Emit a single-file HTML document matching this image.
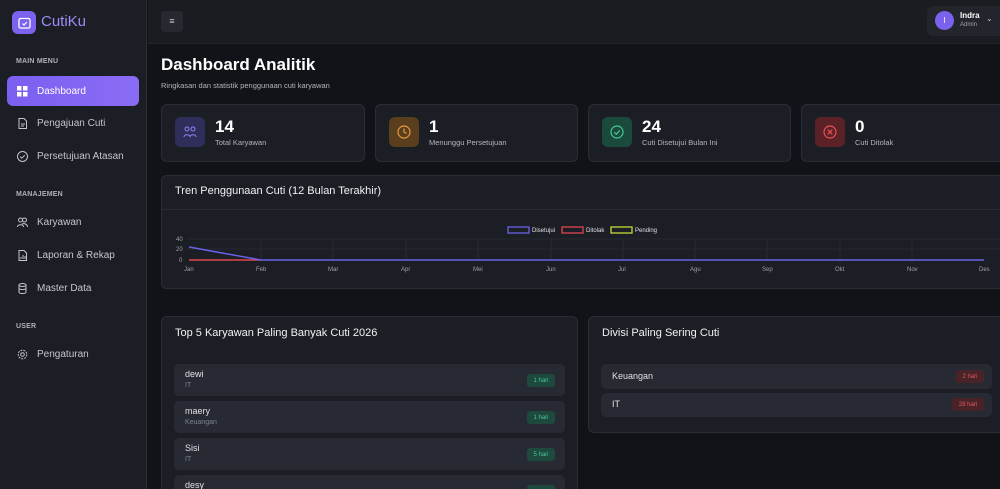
<!DOCTYPE html>
<html style="width:1000px;height:489px;overflow:hidden"><head><meta charset="utf-8"><style>
*{box-sizing:border-box;margin:0;padding:0}
body{width:1000px;height:489px;overflow:hidden;background:#111318;font-family:"Liberation Sans",sans-serif;color:#e6e7ea;position:relative}
.a{position:absolute}
.side{left:0;top:0;width:147px;height:489px;background:#1c1e25;border-right:1px solid #2a2d35}
.sec{font-size:7px;color:#aeb1b8;left:16px;font-weight:bold;letter-spacing:.2px}
.nav{left:7px;width:132px;height:30px;font-size:10px;color:#c3c6cc;display:flex;align-items:center;padding-left:10px}
.nav svg{width:11px;height:11px;margin-right:9px}
.hdr{left:148px;top:0;width:852px;height:44px;background:#1a1c22;border-bottom:1px solid #23262d}
.card{background:#1c1e25;border:1px solid #2a2d35;border-radius:6px;overflow:hidden}
.ib{width:30px;height:30px;border-radius:6px;left:13px;top:12px;display:flex;align-items:center;justify-content:center}
.num{left:53px;top:12px;font-size:17px;font-weight:bold;color:#fff}
.lbl{left:53px;top:33px;font-size:7.5px;color:#b3b6bd}
.item{background:#272a32;border-radius:5px;left:12px;right:12px;height:32px}
.nm{left:11px;top:5px;font-size:9px;color:#dfe1e5}
.sb{left:11px;top:18px;font-size:7px;color:#7d828b}
.bg{right:10px;top:10px;height:13px;width:28px;border-radius:3px;background:#1d4a3d;color:#48c79a;font-size:6px;display:flex;align-items:center;justify-content:center}
.rd{background:#4a2328;color:#e05a5a}
</style></head><body>
<div class="a side">
 <div class="a" style="left:12px;top:11px;width:24px;height:23px;border-radius:6px;background:#7c62ee;display:flex;align-items:center;justify-content:center"><svg width="13" height="12" viewBox="0 0 13 12"><rect x="1" y="1.5" width="11" height="9.5" rx="1.5" fill="none" stroke="#fff" stroke-width="1.3"/><path d="M4.5 6.5l1.5 1.5 2.8-3" stroke="#fff" stroke-width="1.2" fill="none"/></svg></div>
 <div class="a" style="left:41px;top:13px;font-size:15px;color:#9d8cf7">CutiKu</div>
 <div class="a sec" style="top:58px">MAIN MENU</div>
 <div class="a nav" style="top:76px;background:linear-gradient(90deg,#7b5ff0,#8a6cf5);border-radius:6px;color:#fff"><svg viewBox="0 0 11 11"><rect x="0" y="0" width="4.5" height="4.5" fill="#fff"/><rect x="6" y="0" width="4.5" height="4.5" fill="#fff"/><rect x="0" y="6" width="4.5" height="4.5" fill="#fff"/><rect x="6" y="6" width="4.5" height="4.5" fill="#fff"/></svg>Dashboard</div>
 <div class="a nav" style="top:108px"><svg viewBox="0 0 11 11" fill="none" stroke="#c3c6cc"><path d="M2 .5h5l2.5 2.5v7.5H2z M4 6h4M4 8h3"/></svg>Pengajuan Cuti</div>
 <div class="a nav" style="top:141px"><svg viewBox="0 0 11 11" fill="none" stroke="#c3c6cc"><circle cx="5.5" cy="5.5" r="5"/><path d="M3.2 5.6l1.6 1.6 3-3"/></svg>Persetujuan Atasan</div>
 <div class="a sec" style="top:191px">MANAJEMEN</div>
 <div class="a nav" style="top:207px"><svg viewBox="0 0 11 11" fill="none" stroke="#c3c6cc"><circle cx="3.5" cy="3" r="2"/><circle cx="7.5" cy="3" r="2"/><path d="M.5 10c0-3 6-3 6 0M5 7c2-1 5.5 0 5.5 3"/></svg>Karyawan</div>
 <div class="a nav" style="top:240px"><svg viewBox="0 0 11 11" fill="none" stroke="#c3c6cc"><path d="M2 .5h5l2.5 2.5v7.5H2z M4 9V7M6 9V5M8 9V6"/></svg>Laporan &amp; Rekap</div>
 <div class="a nav" style="top:273px"><svg viewBox="0 0 11 11" fill="none" stroke="#c3c6cc"><ellipse cx="5.5" cy="2" rx="3.5" ry="1.5"/><path d="M2 2v7c0 2 7 2 7 0V2M2 5c0 2 7 2 7 0"/></svg>Master Data</div>
 <div class="a sec" style="top:323px">USER</div>
 <div class="a nav" style="top:339px"><svg viewBox="0 0 11 11" fill="none" stroke="#c3c6cc"><circle cx="5.5" cy="5.5" r="1.8"/><circle cx="5.5" cy="5.5" r="4.3" stroke-dasharray="2 1"/></svg>Pengaturan</div>
</div>
<div class="a hdr">
 <div class="a" style="left:13px;top:11px;width:22px;height:21px;background:#262930;border-radius:4px;color:#ccc;font-size:9px;text-align:center;line-height:21px">≡</div>
 <div class="a" style="left:779px;top:6px;width:80px;height:30px;background:#22252c;border-radius:6px">
  <div class="a" style="left:8px;top:5px;width:19px;height:19px;border-radius:50%;background:#7b62ee;color:#fff;font-size:8px;text-align:center;line-height:19px">I</div>
  <div class="a" style="left:33px;top:5px;font-size:8px;font-weight:bold;color:#fff">Indra</div>
  <div class="a" style="left:33px;top:16px;font-size:6px;color:#9ea2a9">Admin</div>
  <div class="a" style="left:59px;top:8px;font-size:8px;color:#ccc">⌄</div>
 </div>
</div>
<div class="a" style="left:161px;top:55px;font-size:17px;font-weight:bold;color:#fff">Dashboard Analitik</div>
<div class="a" style="left:161px;top:81px;font-size:7.5px;color:#b3b6bd">Ringkasan dan statistik penggunaan cuti karyawan</div>

<div class="a card" style="left:161px;top:104px;width:204px;height:58px"><div class="a ib" style="background:#2f2d5a"><svg width="14" height="12" viewBox="0 0 14 12" fill="none" stroke="#8f86f5"><circle cx="4" cy="3" r="2"/><circle cx="10" cy="3" r="2"/><path d="M1 11c0-3 6-3 6 0M7 11c0-3 6-3 6 0"/></svg></div><div class="a num">14</div><div class="a lbl">Total Karyawan</div></div>
<div class="a card" style="left:375px;top:104px;width:203px;height:58px"><div class="a ib" style="background:#5a3f1e"><svg width="14" height="14" viewBox="0 0 14 14" fill="none" stroke="#e89a3c" stroke-width="1.2"><circle cx="7" cy="7" r="6"/><path d="M7 3.5V7l2.5 1.5"/></svg></div><div class="a num">1</div><div class="a lbl">Menunggu Persetujuan</div></div>
<div class="a card" style="left:588px;top:104px;width:203px;height:58px"><div class="a ib" style="background:#1b4a3c"><svg width="14" height="14" viewBox="0 0 14 14" fill="none" stroke="#3fc995" stroke-width="1.2"><circle cx="7" cy="7" r="6"/><path d="M4.3 7.2l2 2 3.5-3.8"/></svg></div><div class="a num">24</div><div class="a lbl">Cuti Disetujui Bulan Ini</div></div>
<div class="a card" style="left:801px;top:104px;width:199px;height:58px;border-right:none;border-radius:6px 0 0 6px"><div class="a ib" style="background:#5a2227"><svg width="14" height="14" viewBox="0 0 14 14" fill="none" stroke="#ee4f57" stroke-width="1.2"><circle cx="7" cy="7" r="6"/><path d="M4.7 4.7l4.6 4.6M9.3 4.7l-4.6 4.6"/></svg></div><div class="a num">0</div><div class="a lbl">Cuti Ditolak</div></div>

<div class="a card" style="left:161px;top:175px;width:839px;height:114px;border-right:none;border-radius:6px 0 0 6px">
 <div class="a" style="left:13px;top:9px;font-size:11px;color:#f1f2f4">Tren Penggunaan Cuti (12 Bulan Terakhir)</div>
 <div class="a" style="left:0;right:0;top:33px;border-top:1px solid #2a2d35"></div>
</div>
<svg class="a" style="left:161px;top:220px" width="839" height="55">
 <g font-family="Liberation Sans" font-size="6" fill="#dfe1e5">
  <rect x="347" y="7" width="21" height="6" fill="none" stroke="#6a62e8" stroke-width="1.3"/><text x="371" y="12">Disetujui</text>
  <rect x="401" y="7" width="21" height="6" fill="none" stroke="#e0454f" stroke-width="1.3"/><text x="425" y="12">Ditolak</text>
  <rect x="450" y="7" width="21" height="6" fill="none" stroke="#c6d83a" stroke-width="1.3"/><text x="474" y="12">Pending</text>
 </g>
 <g stroke="#2a2d34" stroke-width="0.8">
  <line x1="26" y1="19" x2="839" y2="19"/><line x1="26" y1="29" x2="839" y2="29"/>
  <line x1="100" y1="18" x2="100" y2="41"/><line x1="172" y1="18" x2="172" y2="41"/><line x1="245" y1="18" x2="245" y2="41"/><line x1="317" y1="18" x2="317" y2="41"/><line x1="390" y1="18" x2="390" y2="41"/><line x1="462" y1="18" x2="462" y2="41"/><line x1="534" y1="18" x2="534" y2="41"/><line x1="606" y1="18" x2="606" y2="41"/><line x1="679" y1="18" x2="679" y2="41"/><line x1="751" y1="18" x2="751" y2="41"/>
 </g>
 <g font-family="Liberation Sans" font-size="6" fill="#9da1a8">
  <text x="15" y="21">40</text><text x="15" y="31">20</text><text x="18" y="42">0</text>
  <text x="23" y="51">Jan</text><text x="95" y="51">Feb</text><text x="167" y="51">Mar</text><text x="240" y="51">Apr</text><text x="312" y="51">Mei</text><text x="385" y="51">Jun</text><text x="457" y="51">Jul</text><text x="529" y="51">Agu</text><text x="601" y="51">Sep</text><text x="674" y="51">Okt</text><text x="746" y="51">Nov</text><text x="818" y="51">Des</text>
 </g>
 <line x1="28" y1="40" x2="100" y2="40" stroke="#e0454f" stroke-width="1.5"/>
 <polyline points="28,27 100,40 823,40" fill="none" stroke="#6a62e8" stroke-width="1.5"/>
</svg>

<div class="a card" style="left:161px;top:316px;width:417px;height:173px;border-bottom:none;border-radius:6px 6px 0 0">
 <div class="a" style="left:13px;top:10px;font-size:11px;color:#f1f2f4">Top 5 Karyawan Paling Banyak Cuti 2026</div>
 <div class="a item" style="top:47px"><div class="a nm">dewi</div><div class="a sb">IT</div><div class="a bg">1 hari</div></div>
 <div class="a item" style="top:84px"><div class="a nm">maery</div><div class="a sb">Keuangan</div><div class="a bg">1 hari</div></div>
 <div class="a item" style="top:121px"><div class="a nm">Sisi</div><div class="a sb">IT</div><div class="a bg">5 hari</div></div>
 <div class="a item" style="top:158px"><div class="a nm">desy</div><div class="a bg">10 hari</div></div>
</div>
<div class="a card" style="left:588px;top:316px;width:412px;height:117px;border-right:none;border-radius:6px 0 0 6px">
 <div class="a" style="left:13px;top:10px;font-size:11px;color:#f1f2f4">Divisi Paling Sering Cuti</div>
 <div class="a item" style="top:47px;height:25px;right:8px"><div class="a nm" style="top:7px">Keuangan</div><div class="a bg rd" style="top:6px;right:8px">2 hari</div></div>
 <div class="a item" style="top:76px;height:24px;right:8px"><div class="a nm" style="top:6px">IT</div><div class="a bg rd" style="top:5px;right:8px;width:32px">28 hari</div></div>
</div>
</body></html>
